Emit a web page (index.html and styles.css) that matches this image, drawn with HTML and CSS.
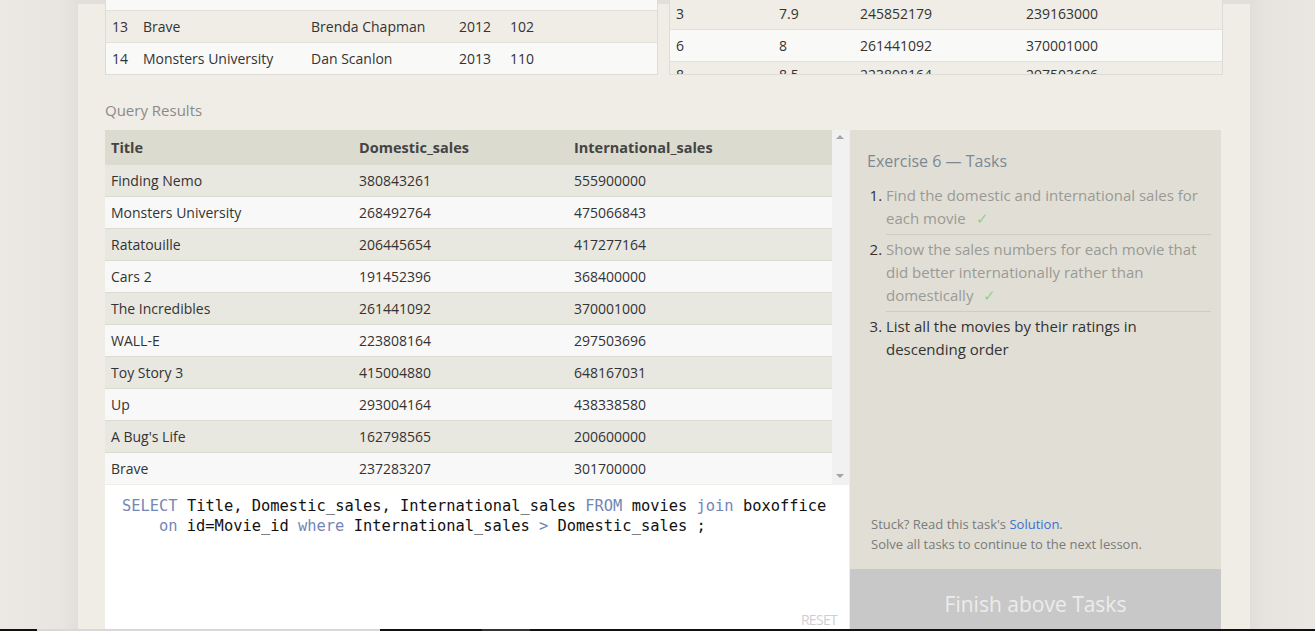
FILE: index.html
```html
<!DOCTYPE html>
<html>
<head>
<meta charset="utf-8">
<link rel="stylesheet" href="styles.css">
</head>
<body>
<div class="screen">
  <div class="page">
    <div class="top-tables">
      <div class="mini-wrap mini-left">
        <table class="mini shift-left">
          <tr class="light"><td class="c-id"></td><td class="c-title"></td><td class="c-dir"></td><td class="c-year"></td><td></td></tr>
          <tr class="dark"><td class="c-id">13</td><td class="c-title">Brave</td><td class="c-dir">Brenda Chapman</td><td class="c-year">2012</td><td>102</td></tr>
          <tr class="light"><td class="c-id">14</td><td class="c-title">Monsters University</td><td class="c-dir">Dan Scanlon</td><td class="c-year">2013</td><td>110</td></tr>
        </table>
      </div>
      <div class="mini-wrap mini-right">
        <table class="mini shift-right">
          <tr class="dark"><td class="r-id">3</td><td class="r-rate">7.9</td><td class="r-dom">245852179</td><td>239163000</td></tr>
          <tr class="light"><td class="r-id">6</td><td class="r-rate">8</td><td class="r-dom">261441092</td><td>370001000</td></tr>
          <tr class="dark peek"><td class="r-id">8</td><td class="r-rate">8.5</td><td class="r-dom">223808164</td><td>297503696</td></tr>
        </table>
      </div>
    </div>

    <div class="label">Query Results</div>

    <div class="workspace">
      <div class="left-col">
        <div class="results">
          <table class="res">
            <thead>
              <tr><th class="col-title">Title</th><th class="col-dom">Domestic_sales</th><th>International_sales</th></tr>
            </thead>
            <tbody>
              <tr class="dark"><td>Finding Nemo</td><td>380843261</td><td>555900000</td></tr>
              <tr class="light"><td>Monsters University</td><td>268492764</td><td>475066843</td></tr>
              <tr class="dark"><td>Ratatouille</td><td>206445654</td><td>417277164</td></tr>
              <tr class="light"><td>Cars 2</td><td>191452396</td><td>368400000</td></tr>
              <tr class="dark"><td>The Incredibles</td><td>261441092</td><td>370001000</td></tr>
              <tr class="light"><td>WALL-E</td><td>223808164</td><td>297503696</td></tr>
              <tr class="dark"><td>Toy Story 3</td><td>415004880</td><td>648167031</td></tr>
              <tr class="light"><td>Up</td><td>293004164</td><td>438338580</td></tr>
              <tr class="dark"><td>A Bug's Life</td><td>162798565</td><td>200600000</td></tr>
              <tr class="light"><td>Brave</td><td>237283207</td><td>301700000</td></tr>
            </tbody>
          </table>
          <div class="scrollbar">
            <span class="arrow up"></span>
            <span class="arrow down"></span>
          </div>
        </div>
        <div class="editor">
          <div class="code-line"><span class="kw">SELECT</span> Title, Domestic_sales, International_sales <span class="kw">FROM</span> movies <span class="kw2">join</span> boxoffice</div>
          <div class="code-line indent"><span class="kw2">on</span> id=Movie_id <span class="kw2">where</span> International_sales <span class="op">&gt;</span> Domestic_sales ;</div>
          <div class="reset">RESET</div>
        </div>
      </div>
      <div class="right-col">
        <div class="tasks">
          <div class="tasks-title">Exercise 6 — Tasks</div>
          <ol class="task-list">
            <li class="done">Find the domestic and international sales for each movie <span class="check">✓</span></li>
            <li class="done">Show the sales numbers for each movie that did better internationally rather than domestically <span class="check">✓</span></li>
            <li class="current">List all the movies by their ratings in descending order</li>
          </ol>
          <div class="stuck">
            <div>Stuck? Read this task's <a class="sol">Solution</a>.</div>
            <div>Solve all tasks to continue to the next lesson.</div>
          </div>
        </div>
        <div class="finish">Finish above Tasks</div>
      </div>
    </div>
  </div>
</div>
<div class="taskbar">
  <span class="tb-a"></span><span class="tb-b"></span><span class="tb-c"></span><span class="tb-d"></span><span class="tb-e"></span>
</div>
</body>
</html>
```

FILE: styles.css
```css
html, body {
  margin: 0;
  padding: 0;
}
body {
  width: 1315px;
  height: 631px;
  overflow: hidden;
  background: linear-gradient(to right, #ece9e5 0px, #e9e5e1 60px, #e2ded9 78px, #e2ded9 1250px, #e6e2de 1262px, #ebe8e4 1315px);
  font-family: "Open Sans", "Noto Sans", sans-serif;
  color: #333;
}
.screen {
  height: 629px;
  overflow: hidden;
}
.page {
  margin-left: 78px;
  width: 1172px;
  height: 629px;
  background: #efede6;
  padding: 0 27px;
  box-sizing: border-box;
  border-top: 1px solid #e2e0da;
  margin-top: 3px;
}
.top-tables {
  display: flex;
  gap: 11px;
  margin-top: -4px;
}
.mini-wrap {
  height: 75px;
  overflow: hidden;
  border: 1px solid #dedcd5;
  border-top: none;
  box-sizing: border-box;
}
.mini-left { width: 553px; }
.mini-right { width: 554px; }
.mini {
  border-collapse: collapse;
  width: 100%;
  font-size: 14px;
}
.shift-left { margin-top: -21px; }
.shift-right { margin-top: -2px; }
.mini td {
  height: 31px;
  padding: 0 0 0 6px;
  border-bottom: 1px solid #e3e1da;
  white-space: nowrap;
}
.mini tr.peek td {
  vertical-align: top;
  padding-top: 3px;
}
.mini tr.dark td { background: #efede5; }
.mini tr.light td { background: #f9f9f8; }
.c-id { width: 25px; }
.c-title { width: 162px; }
.c-dir { width: 142px; }
.c-year { width: 45px; }
.r-id { width: 97px; }
.r-rate { width: 75px; }
.r-dom { width: 160px; }

.label {
  margin-top: 25px;
  height: 30px;
  font-size: 15px;
  color: #8a8a8a;
}
.workspace {
  display: flex;
  gap: 1px;
  height: 510px;
}
.left-col {
  width: 744px;
  display: flex;
  flex-direction: column;
}
.results {
  display: flex;
  height: 355px;
  overflow: hidden;
  flex-shrink: 0;
}
.res {
  width: 727px;
  border-collapse: collapse;
  font-size: 14px;
  align-self: flex-start;
}
.res th {
  text-align: left;
  font-weight: bold;
  background: #dcdbd0;
  color: #444;
  height: 34px;
  padding: 0 6px;
  font-size: 14.5px;
}
.col-title { width: 236px; }
.col-dom { width: 203px; }
.res td {
  height: 31px;
  padding: 0 6px;
  border-top: 1px solid #dcdbd3;
}
.res tr.dark td { background: #e9e8e0; }
.res tr.light td { background: #f8f8f8; }
.scrollbar {
  width: 17px;
  background: #f1f1f1;
  position: relative;
}
.arrow {
  position: absolute;
  left: 4px;
  width: 0;
  height: 0;
  border-left: 4px solid transparent;
  border-right: 4px solid transparent;
}
.arrow.up {
  top: 5px;
  border-bottom: 4px solid #a3a3a3;
}
.arrow.down {
  bottom: 7px;
  border-top: 4px solid #a3a3a3;
}
.editor {
  flex: 1;
  background: #fff;
  padding: 11px 17px;
  position: relative;
  font-family: "DejaVu Sans Mono", "Liberation Mono", monospace;
  font-size: 15.4px;
  line-height: 20px;
  color: #111;
}
.code-line { white-space: pre; }
.indent { padding-left: 37px; }
.kw { color: #7386b6; }
.kw2 { color: #7386b6; }
.op { color: #7386b6; }
.reset {
  position: absolute;
  right: 12px;
  top: 125px;
  font-family: "Open Sans", sans-serif;
  font-size: 14px;
  color: #cfcfcf;
  letter-spacing: -0.7px;
}
.right-col {
  width: 371px;
  display: flex;
  flex-direction: column;
}
.tasks {
  height: 439px;
  flex-shrink: 0;
  background: #e1dfd5;
  padding: 20px 10px 0 17px;
  box-sizing: border-box;
  display: flex;
  flex-direction: column;
}
.tasks-title {
  font-size: 16px;
  color: #7d8894;
  height: 24px;
}
.task-list {
  margin: 10px 0 0 0;
  padding: 0 0 0 19px;
  font-size: 15px;
  line-height: 23px;
}
.task-list li {
  padding: 0 0 4px 0;
  margin-bottom: 3px;
  border-bottom: 1px solid #cfccc2;
}
.task-list li.done { color: #9a9a96; }
.task-list li.done::marker { color: #333; }
.task-list li.current { border-bottom: none; color: #333; }
.check { color: #93cf93; margin-left: 6px; }
.stuck {
  margin-top: auto;
  margin-bottom: 15px;
  font-size: 13px;
  line-height: 20px;
  color: #7a7a7a;
  padding-left: 4px;
}
.sol { color: #3b6ed8; }
.finish {
  height: 70px;
  flex-shrink: 0;
  background: #c8c8c8;
  color: #ececec;
  font-size: 21px;
  display: flex;
  align-items: center;
  justify-content: center;
}
.taskbar {
  height: 2px;
  display: flex;
  background: #111;
}
.tb-a { width: 37px; }
.tb-b { width: 343px; background: #d8d8d8; }
.tb-c { width: 102px; }
.tb-d { width: 48px; background: #333; }
```
